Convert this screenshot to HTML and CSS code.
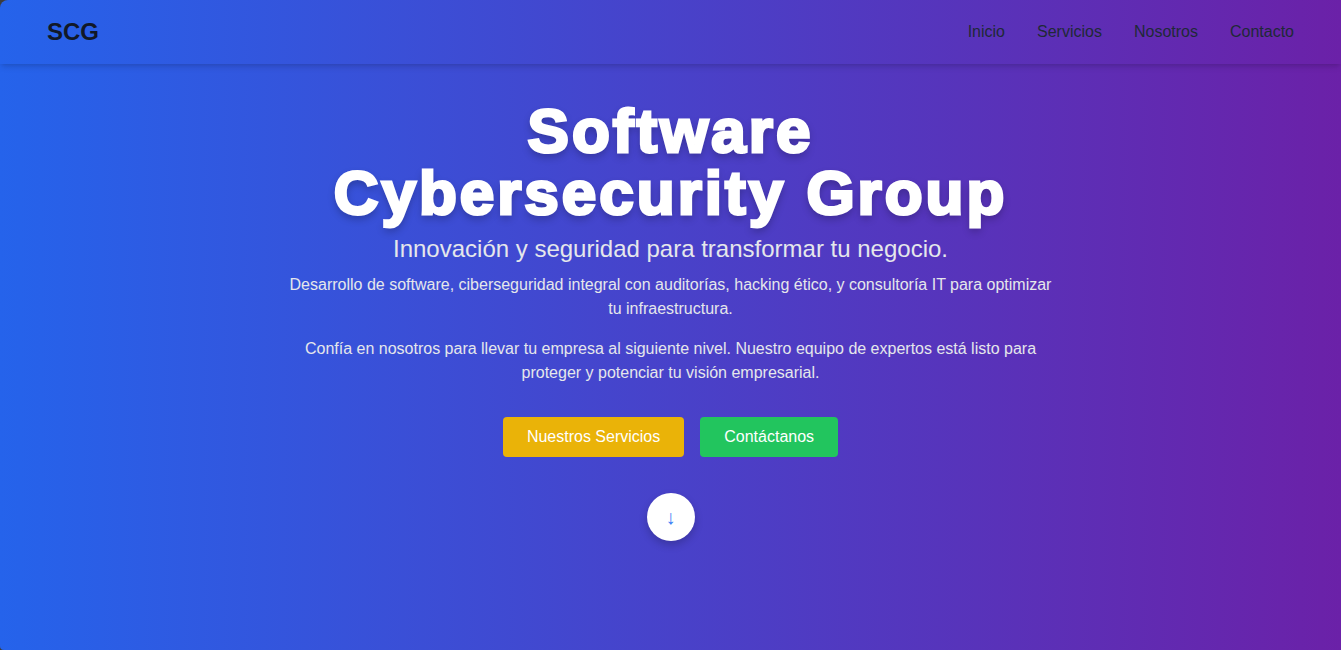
FILE: index.html
```html
<!DOCTYPE html>
<html lang="es">
<head>
<meta charset="utf-8">
<title>Software Cybersecurity Group</title>
<link rel="stylesheet" href="styles.css">
</head>
<body>
<div class="page">
  <header class="site-header">
    <div class="logo">SCG</div>
    <nav class="nav">
      <a href="#">Inicio</a>
      <a href="#">Servicios</a>
      <a href="#">Nosotros</a>
      <a href="#">Contacto</a>
    </nav>
  </header>
  <main class="hero">
    <h1 class="hero-title">Software<br>Cybersecurity Group</h1>
    <p class="hero-subtitle">Innovación y seguridad para transformar tu negocio.</p>
    <p class="hero-text">Desarrollo de software, ciberseguridad integral con auditorías, hacking ético, y consultoría IT para optimizar tu infraestructura.</p>
    <p class="hero-text hero-text-last">Confía en nosotros para llevar tu empresa al siguiente nivel. Nuestro equipo de expertos está listo para proteger y potenciar tu visión empresarial.</p>
    <div class="actions">
      <a class="btn btn-yellow" href="#">Nuestros Servicios</a>
      <a class="btn btn-green" href="#">Contáctanos</a>
    </div>
    <a class="scroll-down" href="#">↓</a>
  </main>
</div>
</body>
</html>
```

FILE: styles.css
```css
* { box-sizing: border-box; }
html, body { margin: 0; padding: 0; height: 100%; }
html { background: #3c3c3c; }
body {
  font-family: "Liberation Sans", Arial, sans-serif;
  color: #fff;
}
.page {
  height: 650px;
  display: flex;
  flex-direction: column;
  background: linear-gradient(to right, #2563eb, #6b21a8);
  border-top-left-radius: 8px;
  border-bottom-left-radius: 4px;
  overflow: hidden;
}
.site-header {
  height: 64px;
  flex: none;
  display: flex;
  align-items: center;
  justify-content: space-between;
  padding: 0 47px;
  box-shadow: 0 4px 6px -1px rgba(0,0,0,0.12), 0 2px 4px -2px rgba(0,0,0,0.1);
}
.logo {
  font-size: 24px;
  font-weight: 700;
  color: #111827;
}
.nav { display: flex; gap: 32px; }
.nav a {
  color: #1f2937;
  text-decoration: none;
  font-size: 16px;
}
.hero {
  flex: 1;
  display: flex;
  flex-direction: column;
  align-items: center;
  text-align: center;
  padding-top: 36px;
}
.hero-title {
  margin: 0 0 9px;
  font-size: 62px;
  line-height: 62px;
  font-weight: 700;
  letter-spacing: 3px;
  -webkit-text-stroke: 3px #fff;
  text-shadow: 0 4px 8px rgba(0,0,0,0.3);
}
.hero-subtitle {
  margin: 0 0 8px;
  font-size: 24px;
  line-height: 32px;
  color: #e5e7eb;
}
.hero-text {
  margin: 0 0 16px;
  max-width: 768px;
  font-size: 16px;
  line-height: 24px;
  color: #e5e7eb;
}
.hero-text-last { margin-bottom: 32px; }
.actions { display: flex; gap: 16px; }
.btn {
  display: inline-block;
  padding: 8px 24px;
  line-height: 24px;
  font-size: 16px;
  color: #fff;
  text-decoration: none;
  border-radius: 4px;
}
.btn-yellow { background: #eab308; }
.btn-green { background: #22c55e; }
.scroll-down {
  margin-top: 36px;
  width: 48px;
  height: 48px;
  border-radius: 50%;
  background: #fff;
  color: #3b82f6;
  display: flex;
  align-items: center;
  justify-content: center;
  font-size: 20px;
  text-decoration: none;
  box-shadow: 0 4px 8px rgba(0,0,0,0.2);
}
```
